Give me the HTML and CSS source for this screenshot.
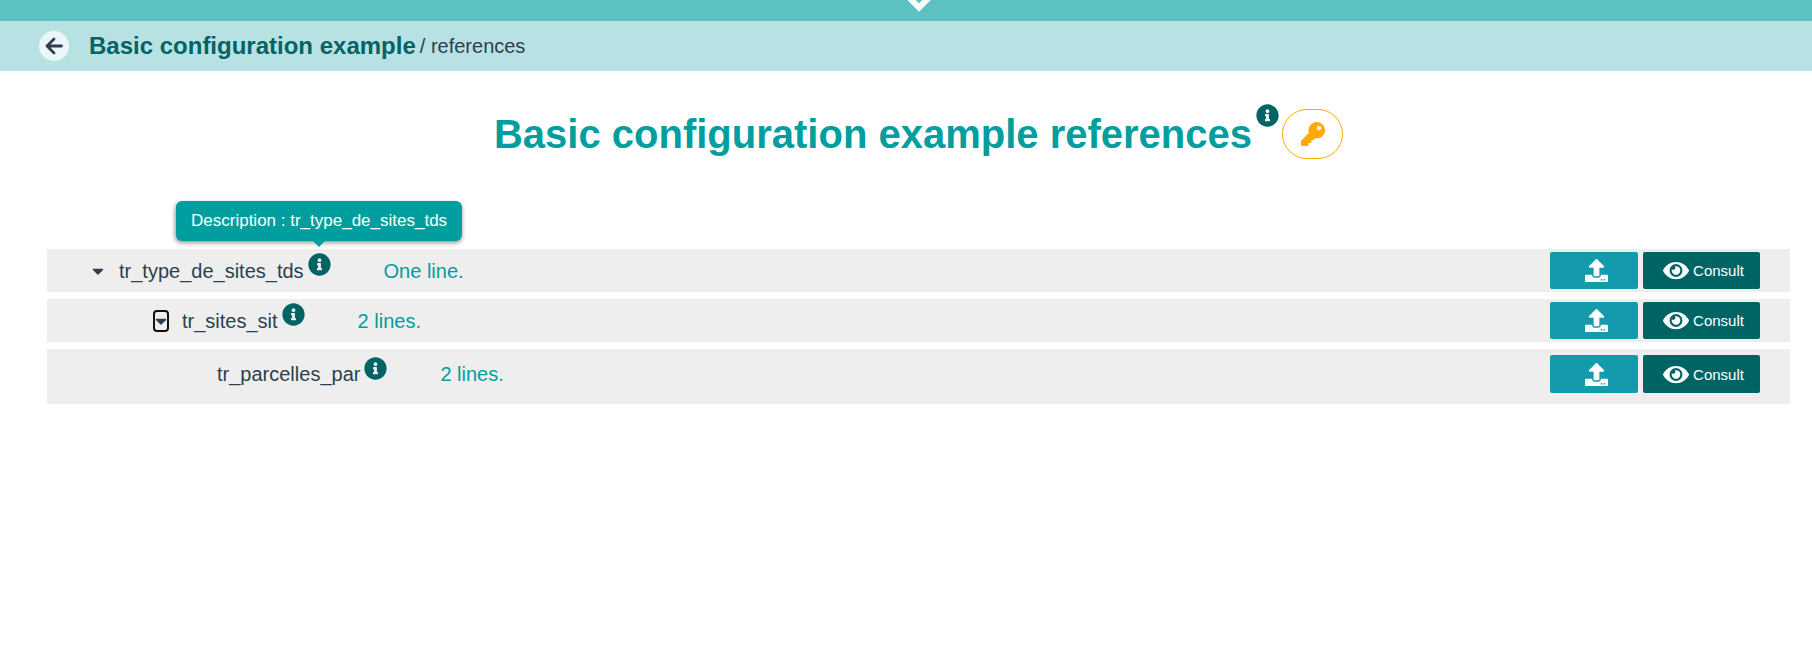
FILE: index.html
```html
<!DOCTYPE html>
<html lang="en">
<head>
  <meta charset="UTF-8">
  <meta name="viewport" content="width=device-width, initial-scale=1.0">
  <title>Basic configuration example references</title>
  <link rel="stylesheet" href="styles.css">
</head>
<body>

  <!-- Shared icons -->
  <svg class="sprite" aria-hidden="true">
    <symbol id="icon-info" viewBox="0 0 512 512">
      <path d="M256 8C119.043 8 8 119.083 8 256c0 136.997 111.043 248 248 248s248-111.003 248-248C504 119.083 392.957 8 256 8zm0 110c23.196 0 42 18.804 42 42s-18.804 42-42 42-42-18.804-42-42 18.804-42 42-42zm56 254c0 6.627-5.373 12-12 12h-88c-6.627 0-12-5.373-12-12v-24c0-6.627 5.373-12 12-12h12v-64h-12c-6.627 0-12-5.373-12-12v-24c0-6.627 5.373-12 12-12h64c6.627 0 12 5.373 12 12v100h12c6.627 0 12 5.373 12 12v24z"/>
    </symbol>
    <symbol id="icon-caret" viewBox="0 0 320 512">
      <path d="M31.3 192h257.3c17.8 0 26.7 21.5 14.1 34.1L174.1 354.8c-7.8 7.8-20.5 7.8-28.3 0L17.2 226.1C4.6 213.5 13.5 192 31.3 192z"/>
    </symbol>
    <symbol id="icon-upload" viewBox="0 0 512 512">
      <path d="M296 384h-80c-13.3 0-24-10.7-24-24V192h-87.7c-17.8 0-26.7-21.5-14.1-34.1L242.3 5.7c7.5-7.5 19.8-7.5 27.3 0l152.2 152.2c12.6 12.6 3.7 34.1-14.1 34.1H320v168c0 13.3-10.7 24-24 24zm216-8v112c0 13.3-10.7 24-24 24H24c-13.3 0-24-10.7-24-24V376c0-13.3 10.7-24 24-24h136v8c0 30.9 25.1 56 56 56h80c30.9 0 56-25.1 56-56v-8h136c13.3 0 24 10.7 24 24zm-124 88c0-11-9-20-20-20s-20 9-20 20 9 20 20 20 20-9 20-20zm64 0c0-11-9-20-20-20s-20 9-20 20 9 20 20 20 20-9 20-20z"/>
    </symbol>
    <symbol id="icon-eye" viewBox="0 0 576 512">
      <path d="M572.52 241.4C518.29 135.59 410.93 64 288 64S57.68 135.64 3.48 241.41a32.35 32.35 0 0 0 0 29.19C57.71 376.41 165.07 448 288 448s230.32-71.64 284.52-177.41a32.35 32.35 0 0 0 0-29.19zM288 400a144 144 0 1 1 144-144 143.93 143.93 0 0 1-144 144zm0-240a95.31 95.31 0 0 0-25.31 3.79 47.85 47.85 0 0 1-66.9 66.9A95.78 95.78 0 1 0 288 160z"/>
    </symbol>
  </svg>

  <div class="top-bar">
    <svg class="menu-arrow" viewBox="0 0 28 21"><path d="M2 -4.5L14 7.5L26 -4.5"/></svg>
  </div>

  <nav class="breadcrumb">
    <button class="back-button" aria-label="Back">
      <svg viewBox="0 0 18 18"><path d="M16.5 9H2M9 2L2 9L9 16"/></svg>
    </button>
    <a class="breadcrumb-app" href="#">Basic configuration example</a>
    <span class="breadcrumb-page">/ references</span>
  </nav>

  <main class="container">
    <div class="title-row">
      <h1>Basic configuration example references</h1>
      <svg class="info"><use href="#icon-info"/></svg>
      <button class="key-button" aria-label="Authorizations">
        <svg viewBox="0 0 512 512"><path d="M512 176.001C512 273.203 433.202 352 336 352c-11.22 0-22.19-1.062-32.827-3.069l-24.012 27.014A23.999 23.999 0 0 1 261.223 384H224v40c0 13.255-10.745 24-24 24h-40v40c0 13.255-10.745 24-24 24H24c-13.255 0-24-10.745-24-24v-78.059c0-6.365 2.529-12.47 7.029-16.971l161.802-161.802C163.108 213.814 160 195.271 160 176 160 78.798 238.797.001 335.999 0 433.488-.001 512 78.511 512 176.001zM336 128c0 26.51 21.49 48 48 48s48-21.49 48-48-21.49-48-48-48-48 21.49-48 48z"/></svg>
      </button>
    </div>

    <div class="tree">
      <div class="row">
        <button class="caret" aria-label="Collapse"><svg><use href="#icon-caret"/></svg></button>
        <span class="name">tr_type_de_sites_tds</span>
        <span class="info-wrap">
          <svg class="info"><use href="#icon-info"/></svg>
          <span class="tooltip" role="tooltip">Description : tr_type_de_sites_tds</span>
        </span>
        <span class="lines">One line.</span>
        <div class="actions">
          <button class="btn upload" aria-label="Upload"><svg><use href="#icon-upload"/></svg></button>
          <button class="btn consult"><svg><use href="#icon-eye"/></svg>Consult</button>
        </div>
      </div>

      <div class="row level-2">
        <button class="caret focused" aria-label="Collapse"><svg><use href="#icon-caret"/></svg></button>
        <span class="name">tr_sites_sit</span>
        <span class="info-wrap"><svg class="info"><use href="#icon-info"/></svg></span>
        <span class="lines">2 lines.</span>
        <div class="actions">
          <button class="btn upload" aria-label="Upload"><svg><use href="#icon-upload"/></svg></button>
          <button class="btn consult"><svg><use href="#icon-eye"/></svg>Consult</button>
        </div>
      </div>

      <div class="row level-3">
        <span class="name">tr_parcelles_par</span>
        <span class="info-wrap"><svg class="info"><use href="#icon-info"/></svg></span>
        <span class="lines">2 lines.</span>
        <div class="actions">
          <button class="btn upload" aria-label="Upload"><svg><use href="#icon-upload"/></svg></button>
          <button class="btn consult"><svg><use href="#icon-eye"/></svg>Consult</button>
        </div>
      </div>
    </div>
  </main>

</body>
</html>
```
FILE: styles.css
```css
* {
  box-sizing: border-box;
}

body {
  margin: 0;
  font-family: "Liberation Sans", Arial, sans-serif;
  font-size: 20px;
  line-height: 24px;
  color: #2c3e50;
  background: white;
}

button {
  font-family: inherit;
  margin: 0;
  padding: 0;
  border: none;
  background: none;
  color: inherit;
  cursor: pointer;
}

svg {
  display: block;
  fill: currentColor;
}

.sprite {
  display: none;
}

.top-bar {
  display: flex;
  justify-content: center;
  padding: 0 22px 0 47px;
  background: #5bc2c1;
}

.menu-arrow {
  width: 28px;
  height: 21px;
  fill: none;
  stroke: white;
  stroke-width: 6;
}

/* Breadcrumb */
.breadcrumb {
  display: flex;
  align-items: center;
  padding: 10px 39px;
  background: #b8e1e4;
}

.back-button {
  display: flex;
  align-items: center;
  justify-content: center;
  width: 30px;
  height: 30px;
  margin-right: 20px;
  border-radius: 50%;
  background: rgba(255, 255, 255, 0.7);
}

.back-button svg {
  width: 18px;
  height: 18px;
  fill: none;
  stroke: currentColor;
  stroke-width: 2.8;
  stroke-linecap: round;
  stroke-linejoin: round;
}

.breadcrumb-app {
  margin-right: 4px;
  font-size: 24px;
  font-weight: bold;
  color: #006464;
  text-decoration: none;
}

/* Content */
.container {
  padding: 38px 22px 0 47px;
}

.title-row {
  display: flex;
  justify-content: center;
  align-items: center;
}

h1 {
  margin: 0;
  font-size: 40px;
  line-height: 50px;
  color: #009e9e;
}

.info {
  flex: none;
  width: 23px;
  height: 23px;
  color: #006464;
}

.title-row .info {
  align-self: flex-start;
  margin: -5px 3px 0 4px;
}

.key-button {
  display: flex;
  align-items: center;
  justify-content: center;
  width: 61px;
  height: 50px;
  border: 1px solid #ffaa00;
  border-radius: 25px;
  color: #ffaa00;
}

.key-button svg {
  width: 24px;
  height: 24px;
}

.tree {
  display: flex;
  flex-direction: column;
  gap: 7px;
  margin-top: 90px;
}

.row {
  display: flex;
  align-items: center;
  padding: 3px 30px 3px 45px;
  background: #eeeeee;
}

.level-2 {
  padding-left: 108px;
}

.level-3 {
  padding: 6px 30px 11px 170px;
}

.level-3 .btn {
  height: 38px;
}

.caret {
  margin-right: 15px;
  border-radius: 2px;
}

.caret svg {
  width: 12px;
  height: 18px;
}

.focused {
  outline: 2px solid #101010;
}

.info-wrap {
  position: relative;
  margin: 0 53px 12px 4px;
}

.tooltip {
  position: absolute;
  bottom: 35px;
  left: 50%;
  transform: translateX(-50%);
  padding: 8px 15px;
  border-radius: 6px;
  background: #009e9e;
  box-shadow: 0 2px 4px rgba(0, 0, 0, 0.4);
  color: white;
  font-size: 17px;
  white-space: nowrap;
}

.tooltip::after {
  content: "";
  position: absolute;
  top: 100%;
  left: 50%;
  margin-left: -6px;
  border: 6px solid transparent;
  border-top-color: #009e9e;
}

.lines {
  color: #009e9e;
}

.actions {
  display: flex;
  gap: 5px;
  margin-left: auto;
}

.btn {
  display: flex;
  align-items: center;
  justify-content: center;
  height: 37px;
  border-radius: 2px;
  color: white;
  font-size: 15px;
}

.btn svg {
  height: 23px;
}

.upload {
  width: 88px;
  padding-left: 5px;
  background: #139bab;
}

.upload svg {
  width: 23px;
}

.consult {
  gap: 4px;
  width: 117px;
  padding-left: 4px;
  background: #006464;
}

.consult svg {
  width: 26px;
}
```
